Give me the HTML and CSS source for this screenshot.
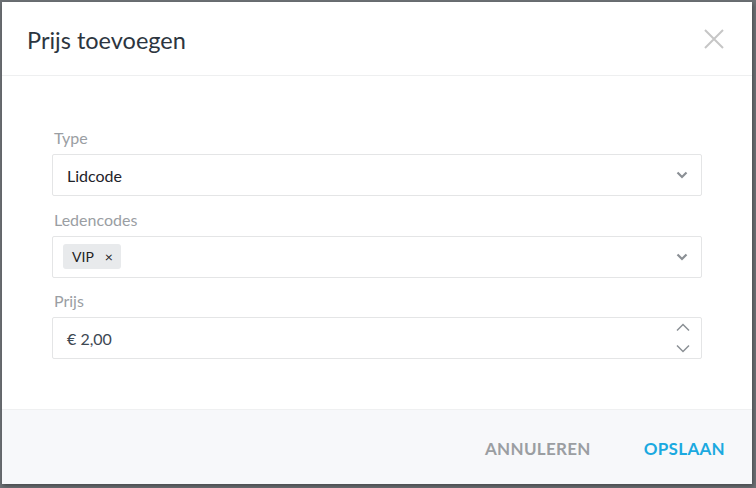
FILE: index.html
```html
<!DOCTYPE html>
<html lang="nl">
    <head>
        <meta charset="utf-8">
        <title>Prijs toevoegen</title>
        <link rel="stylesheet" href="styles.css">
    </head>
    <body>
        <div class="modal">
            <div class="modal-header">
                <h1>Prijs toevoegen</h1>
                <button class="close" aria-label="Sluiten">
                    <svg width="20" height="20" viewBox="0 0 20 20">
                        <path d="M1 1 L19 19 M19 1 L1 19" stroke="#c6c6c6" stroke-width="2" fill="none"/>
                    </svg>
                </button>
            </div>

            <div class="modal-body">
                <!-- Type -->
                <label class="field-label">Type</label>
                <div class="field">
                    <span class="value">Lidcode</span>
                    <svg class="chevron" width="12" height="8" viewBox="0 0 12 8">
                        <path d="M1.5 1.5 L6 6 L10.5 1.5" stroke="#8b9095" stroke-width="2.2" fill="none"/>
                    </svg>
                </div>

                <!-- Ledencodes -->
                <label class="field-label">Ledencodes</label>
                <div class="field">
                    <span class="tag">VIP <span class="tag-x">&times;</span></span>
                    <svg class="chevron" width="12" height="8" viewBox="0 0 12 8">
                        <path d="M1.5 1.5 L6 6 L10.5 1.5" stroke="#8b9095" stroke-width="2.2" fill="none"/>
                    </svg>
                </div>

                <!-- Prijs -->
                <label class="field-label">Prijs</label>
                <div class="field">
                    <span class="value price">€ 2,00</span>
                    <div class="spinner">
                        <svg width="14" height="9" viewBox="0 0 14 9">
                            <path d="M1 7.5 L7 1.5 L13 7.5" stroke="#8b9095" stroke-width="1.5" fill="none"/>
                        </svg>
                        <svg width="14" height="9" viewBox="0 0 14 9">
                            <path d="M1 1.5 L7 7.5 L13 1.5" stroke="#8b9095" stroke-width="1.5" fill="none"/>
                        </svg>
                    </div>
                </div>
            </div>

            <div class="modal-footer">
                <button class="btn btn-cancel">Annuleren</button>
                <button class="btn btn-save">Opslaan</button>
            </div>
        </div>
    </body>
</html>
```

FILE: styles.css
```css
html, body {
    margin: 0;
    height: 100%;
}
body {
    background-color: #6c7074;
    font-family: Lato, "Open Sans", sans-serif;
    padding: 2px 4px 4px 2px;
    box-sizing: border-box;
}
.modal {
    background: white;
    height: 482px;
    display: flex;
    flex-direction: column;
    box-shadow: 1px 2px 4px rgba(0, 0, 0, 0.35);
}

.modal-header {
    height: 73px;
    border-bottom: 1px solid #eeeff0;
    display: flex;
    align-items: center;
    justify-content: space-between;
    padding: 0 28px 0 25px;
}
.modal-header h1 {
    margin: 0;
    font-size: 23.5px;
    font-weight: 400;
    color: #2c3540;
    padding-top: 2px;
}
.close {
    border: none;
    background: none;
    padding: 0;
    display: flex;
}

.modal-body {
    flex: 1;
    padding: 52px 50px 0 50px;
}
.field-label {
    display: block;
    font-size: 16px;
    line-height: 20px;
    color: #9a9ea3;
    margin-top: 13.5px;
    margin-bottom: 6px;
    padding-left: 2px;
}
.field-label:first-child {
    margin-top: 0;
}
.field {
    height: 40px;
    border: 1px solid #e4e5e6;
    border-radius: 2px;
    display: flex;
    align-items: center;
    padding: 0 13px 0 10px;
}
.value {
    flex: 1;
    font-size: 16px;
    color: #1f2329;
    padding-left: 4px;
}
.price {
    color: #3d4853;
}
.chevron {
    margin-left: auto;
}
.tag {
    background-color: #e8eaec;
    border-radius: 3px;
    height: 25px;
    line-height: 25px;
    font-size: 14px;
    color: #222;
    padding: 0 8px 0 9px;
    display: inline-flex;
    align-items: center;
}
.tag-x {
    margin-left: 11px;
    font-size: 14px;
}
.spinner {
    display: flex;
    flex-direction: column;
    gap: 12px;
    margin-right: -2px;
}
.spinner svg {
    display: block;
}

.modal-footer {
    height: 74px;
    background-color: #f7f8fa;
    border-top: 1px solid #eff0f1;
    display: flex;
    align-items: center;
    justify-content: flex-end;
    padding-right: 27px;
    gap: 53px;
}
.btn {
    border: none;
    background: none;
    padding: 0;
    font-family: Lato, "Open Sans", sans-serif;
    font-size: 17px;
    font-weight: 700;
    text-transform: uppercase;
    letter-spacing: 0.3px;
    margin-top: 3px;
}
.btn-cancel {
    color: #9b9ea2;
}
.btn-save {
    color: #1ba9e0;
}
```
